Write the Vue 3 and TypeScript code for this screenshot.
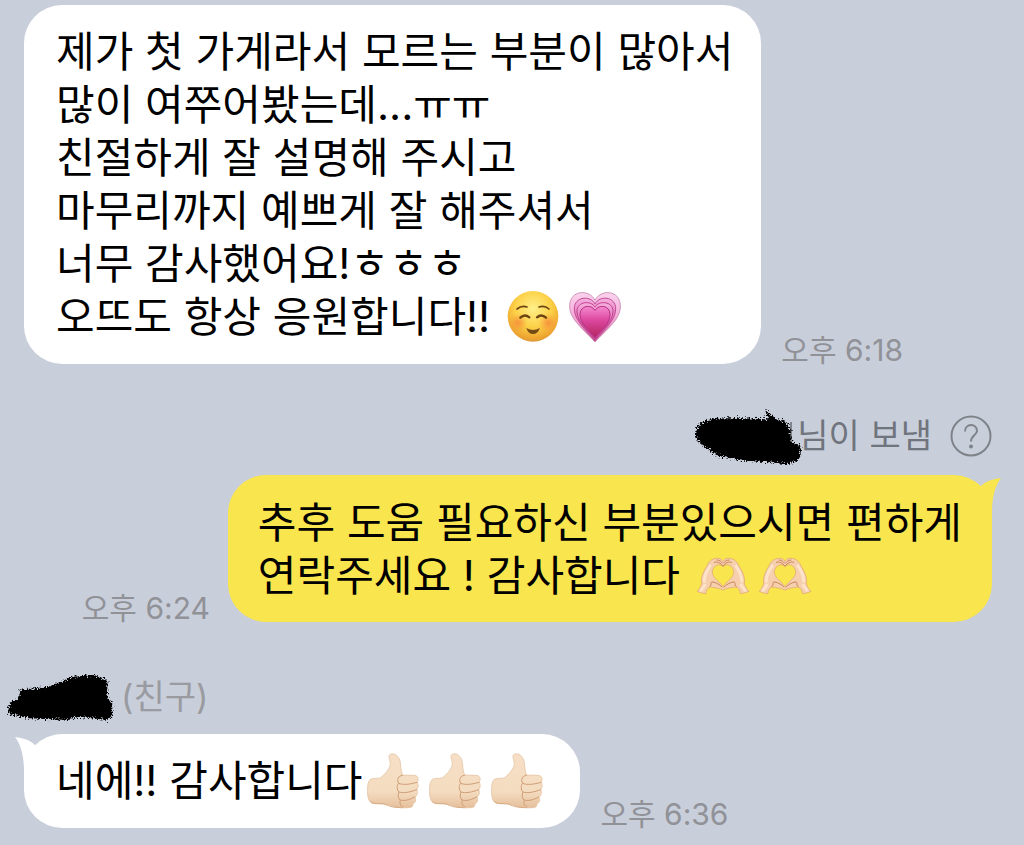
<script setup lang="ts">
type EmojiName = 'smile' | 'heart' | 'hands' | 'thumb'

interface Message {
  id: number
  side: 'in' | 'out'
  sender?: string
  tail: boolean
  lines: string[]
  emojis: EmojiName[]
  time: string
}

const labels: Record<EmojiName, string> = {
  smile: '미소',
  heart: '커지는 하트',
  hands: '손 하트',
  thumb: '엄지 척',
}

const messages: Message[] = [
  {
    id: 1,
    side: 'in',
    tail: false,
    lines: [
      '제가 첫 가게라서 모르는 부분이 많아서',
      '많이 여쭈어봤는데...ㅠㅠ',
      '친절하게 잘 설명해 주시고',
      '마무리까지 예쁘게 잘 해주셔서',
      '너무 감사했어요!ㅎㅎㅎ',
      '오뜨도 항상 응원합니다!! ',
    ],
    emojis: ['smile', 'heart'],
    time: '오후 6:18',
  },
  {
    id: 2,
    side: 'out',
    sender: '님이 보냄',
    tail: true,
    lines: ['추후 도움 필요하신 부분있으시면 편하게', '연락주세요 ! 감사합니다 '],
    emojis: ['hands', 'hands'],
    time: '오후 6:24',
  },
  {
    id: 3,
    side: 'in',
    sender: '(친구)',
    tail: true,
    lines: ['네에!! 감사합니다'],
    emojis: ['thumb', 'thumb', 'thumb'],
    time: '오후 6:36',
  },
]
</script>

<template>
  <svg class="defs" width="0" height="0" aria-hidden="true">
    <defs>
      <radialGradient id="face" cx="50%" cy="35%" r="65%">
        <stop offset="0" stop-color="#fff08a" />
        <stop offset="0.55" stop-color="#fcd148" />
        <stop offset="0.9" stop-color="#eea530" />
        <stop offset="1" stop-color="#dc9a3c" />
      </radialGradient>
      <radialGradient id="cheek">
        <stop offset="0" stop-color="#f7813a" stop-opacity="0.75" />
        <stop offset="1" stop-color="#f7913a" stop-opacity="0" />
      </radialGradient>
      <linearGradient id="heartOuter" x1="0" y1="0" x2="0" y2="1">
        <stop offset="0" stop-color="#fbd3ee" />
        <stop offset="0.6" stop-color="#f2a0d2" />
        <stop offset="1" stop-color="#c03a80" />
      </linearGradient>
      <linearGradient id="heartMid" x1="0" y1="0" x2="0" y2="1">
        <stop offset="0" stop-color="#f7b0e0" />
        <stop offset="1" stop-color="#c83c8c" />
      </linearGradient>
      <linearGradient id="heartInner" x1="0" y1="0" x2="0" y2="1">
        <stop offset="0" stop-color="#f58ad0" />
        <stop offset="0.45" stop-color="#dc479f" />
        <stop offset="1" stop-color="#b3255f" />
      </linearGradient>
      <linearGradient id="skin" x1="0" y1="0" x2="0" y2="1">
        <stop offset="0" stop-color="#f6dfc6" />
        <stop offset="0.7" stop-color="#f4dcc0" />
        <stop offset="1" stop-color="#e6bf9b" />
      </linearGradient>
      <filter id="rough" x="-10%" y="-20%" width="120%" height="140%">
        <feTurbulence type="fractalNoise" baseFrequency="0.2" numOctaves="4" seed="4" />
        <feDisplacementMap in="SourceGraphic" scale="24" xChannelSelector="R" yChannelSelector="G" />
      </filter>
    </defs>
  </svg>

  <main class="chat">
    <article v-for="m in messages" :key="m.id" class="message" :class="m.side">
      <header v-if="m.sender" class="sender">
        <svg v-if="m.side === 'out'" class="scribble sent" viewBox="51 27 324 177" aria-hidden="true">
          <path d="M342 72V137" stroke="#70757d" stroke-width="5" />
          <path
            filter="url(#rough)"
            d="M54 102C62 82 72 70 104 64C150 58 205 62 274 64L264 32L296 62L328 72L341 98L340 130L370 144L372 164L360 188L330 199L276 193L200 188L122 174L82 144L60 126Z"
          />
        </svg>
        <svg v-else class="scribble received" viewBox="21 38 318 147" aria-hidden="true">
          <path
            filter="url(#rough)"
            d="M24 160L30 126L56 116L62 88L142 80L182 66L210 50L280 44L322 60L322 112L336 124L338 164L322 179L240 170L190 178L90 174Z"
          />
        </svg>
        <span class="name">{{ m.sender }}</span>
        <button v-if="m.side === 'out'" class="help" type="button" aria-label="도움말">
          <svg viewBox="0 0 42 42" aria-hidden="true">
            <circle cx="21" cy="21" r="19.5" />
            <path d="M15 16.500C15 8 27 8 27 16C27 20 21 20.500 21 26.500" />
            <circle class="dot" cx="21" cy="31.500" r="2" />
          </svg>
        </button>
      </header>

      <div class="row">
        <div class="bubble" :class="{ plain: !m.tail }">
          <svg v-if="m.tail" class="tail" viewBox="0 0 48 40" aria-hidden="true">
            <path d="M10 38V12L28 11C33 6 40 4 48 3C42 11 39 22 39 38Z" />
          </svg>
          <p v-for="(line, i) in m.lines" :key="i" class="line">
            <span class="words">{{ line }}</span>
            <template v-if="i === m.lines.length - 1">
              <template v-for="(e, k) in m.emojis" :key="k">
                <svg v-if="e === 'smile'" class="emoji" viewBox="21 31 156 156" role="img" :aria-label="labels[e]">
                  <circle cx="99" cy="107" r="76" fill="url(#face)" />
                  <circle cx="54" cy="126" r="29" fill="url(#cheek)" />
                  <circle cx="144" cy="126" r="29" fill="url(#cheek)" />
                  <g fill="none" stroke="#6b4312" stroke-linecap="round">
                    <path d="M51 85Q65 73 81 79M117 79Q134 73 147 85" stroke-width="5" />
                    <path d="M61 111Q74 98 88 110M111 110Q124 98 138 111" stroke-width="7" />
                  </g>
                  <path d="M79 142Q99 154 120 142Q113 160 99 160Q85 160 79 142Z" fill="#744a14" />
                </svg>
                <svg v-else-if="e === 'heart'" class="emoji" viewBox="208 30 156 156" role="img" :aria-label="labels[e]">
                  <path d="M286 58C270 24 211 26 210 74C209 116 254 146 286 183C318 146 364 116 362 74C361 26 302 24 286 58Z" fill="url(#heartOuter)" stroke="#cd93b8" stroke-width="3" />
                  <path d="M286 69C273 42 224 46 224 83C224 120 260 145 286 177C312 145 348 120 348 83C348 46 299 42 286 69Z" fill="url(#heartMid)" stroke="#c04b94" stroke-width="3" />
                  <path d="M286 78C275 58 232 60 232 91C232 123 264 145 286 173C308 145 340 123 340 91C340 60 297 58 286 78Z" fill="url(#heartMid)" stroke="#c33f91" stroke-width="3" />
                  <path d="M286 88C275 69 241 73 241 100C241 128 267 146 286 169C305 146 331 128 331 100C331 73 297 69 286 88Z" fill="url(#heartInner)" stroke="#b62d82" stroke-width="3" />
                </svg>
                <svg v-else-if="e === 'hands'" class="emoji" viewBox="50 28 156 156" role="img" :aria-label="labels[e]">
                  <path
                    fill="#f6d0ae"
                    fill-rule="evenodd"
                    stroke="#dca374"
                    stroke-width="2"
                    stroke-linejoin="round"
                    d="M51 152C56 146 62 138 64 128C61 108 70 92 80 76C86 58 102 51 116 53C122 54 126 58 128 62C130 58 134 54 140 53C154 51 170 58 176 76C186 92 195 108 192 128C194 138 200 146 206 152C198 156 190 158 180 159C180 150 175 143 168 139C154 141 140 142 128 148C116 142 102 141 88 139C81 143 77 150 77 159C67 158 58 156 51 152ZM128 77C114 66 98 76 96 93C95 112 116 120 128 138C140 120 161 112 160 93C158 76 142 66 128 77Z"
                  />
                  <path d="M72 122C70 106 80 90 89 76M184 122C186 106 176 90 167 76M62 149L73 134M194 149L183 134" fill="none" stroke="#fde3ca" stroke-width="9" stroke-linecap="round" />
                  <g fill="none" stroke="#c98358" stroke-width="3" stroke-linecap="round">
                    <path d="M88 138C98 132 86 123 98 124C108 126 118 132 125 139M168 138C158 132 170 123 158 124C148 126 138 132 131 139" />
                    <path d="M102 65C112 62 120 66 127 76M154 65C144 62 136 66 129 76M110 58C118 58 122 62 126 67M146 58C138 58 134 62 130 67" />
                  </g>
                </svg>
                <svg v-else class="emoji" viewBox="54 73 156 156" role="img" :aria-label="labels[e]">
                  <path
                    fill="url(#skin)"
                    stroke="#e0bb97"
                    stroke-width="2"
                    d="M120 80C118 71 128 67 138 71C150 77 155 91 155 106C156 118 158 126 161 133L197 134C209 136 210 149 204 154C209 160 209 171 203 176C207 182 206 194 198 199C202 207 200 217 191 219C194 227 188 231 178 231C158 233 138 230 121 223C106 218 95 220 81 219C64 220 57 210 56 190C55 170 56 153 64 146C73 141 86 145 95 141C106 132 119 119 123 105C125 96 122 88 120 80Z"
                  />
                  <path
                    fill="none"
                    stroke="#cf9d75"
                    stroke-width="3"
                    stroke-linecap="round"
                    stroke-linejoin="round"
                    d="M160 134C147 135 143 148 149 158C143 164 143 178 150 184C146 192 147 204 154 209C151 217 154 226 162 229M149 158C162 164 183 161 204 155M150 184C163 189 184 184 203 177M154 208C165 212 181 208 197 199"
                  />
                  <path d="M64 212C73 222 89 217 106 220C122 228 137 231 158 231" fill="none" stroke="#d8ab82" stroke-width="3" />
                </svg>
              </template>
            </template>
          </p>
        </div>
        <time class="time">{{ m.time }}</time>
      </div>
    </article>
  </main>
</template>

<style>
body {
  margin: 0;
  background: #c9cedb;
}
</style>

<style scoped>
.defs {
  position: absolute;
}

.chat {
  box-sizing: border-box;
  min-height: 100vh;
  padding: 5px 32px 16px 24px;
  background: #c9cedb;
  color: #000;
  font-family: Inter, "Noto Sans CJK KR", sans-serif;
}

.row {
  display: flex;
  align-items: flex-end;
  gap: 20px;
}

.out .row {
  flex-direction: row-reverse;
  gap: 18px;
}

.bubble {
  position: relative;
  padding: 20px 32px 21px;
  border-radius: 38px;
  background: #fff;
}

.bubble.plain {
  padding-right: 28px;
}

.out .bubble {
  padding: 21px 30px 20px;
  background: #f9e54d;
}

.line {
  display: flex;
  align-items: center;
  margin: 0;
  font-size: 42px;
  line-height: 53px;
}

.words {
  white-space: pre;
}

.emoji {
  flex: none;
  width: 52px;
  height: 52px;
  margin: 0 5px;
  overflow: visible;
}

.time {
  color: #909297;
  font-size: 30px;
  line-height: 28px;
  white-space: nowrap;
}

.sender {
  display: flex;
  align-items: center;
  height: 42px;
  color: #70757d;
  font-size: 34px;
  line-height: 42px;
}

.out .sender {
  justify-content: flex-end;
  margin: 51px 0 18px;
}

.in .sender {
  margin: 54px 0 16px -17px;
  color: #999ba0;
}

.scribble {
  flex: none;
  overflow: visible;
}

.sent {
  width: 108px;
  height: 59px;
  margin-right: -5px;
}

.received {
  width: 106px;
  height: 49px;
  margin-right: 8px;
}

.help {
  width: 42px;
  height: 42px;
  margin-left: 18px;
  padding: 0;
  border: 0;
  background: none;
}

.help svg {
  display: block;
  fill: none;
  stroke: #7f8389;
  stroke-width: 2;
}

.help .dot {
  fill: #7f8389;
  stroke: none;
}

.tail {
  position: absolute;
  top: 0;
  right: -9px;
  width: 48px;
  height: 40px;
  fill: #f9e54d;
}

.in .tail {
  right: auto;
  left: -9px;
  transform: scaleX(-1);
  fill: #fff;
}
</style>
